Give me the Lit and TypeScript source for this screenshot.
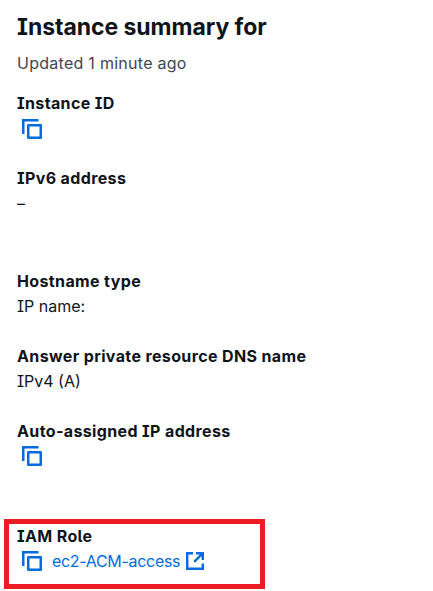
import { LitElement, html, css, svg } from "lit";
import { customElement, property } from "lit/decorators.js";

const copyIcon = html`<svg class="icon" width="20" height="20" viewBox="0 0 20 20" fill="none" stroke="currentColor" stroke-width="2.5">
  ${svg`<path d="M1.25 15V1.25H16.5"/><rect x="6.25" y="6.25" width="12.5" height="12.5" stroke-linejoin="round"/>`}
</svg>`;

const externalIcon = html`<svg class="icon" width="18" height="18" viewBox="0 0 18 18" fill="none" stroke="currentColor" stroke-width="2.4">
  ${svg`<path d="M7 1.2H1.2V16.8H16.8V11.5M10 1.2H16.8V8M16.3 1.7L8.2 9.8"/>`}
</svg>`;

@customElement("summary-field")
class SummaryField extends LitElement {
  @property() label = "";
  @property() value = "";
  @property() link = "";
  @property({ type: Boolean }) copy = false;

  static styles = css`
    :host { display: block; height: 50px; }
    .label { font-size: 16px; font-weight: 700; line-height: 24px; height: 24px; white-space: nowrap; letter-spacing: 0.37px; }
    .value { display: flex; align-items: center; height: var(--value-height, 26px); font-size: 16px; line-height: 20px; white-space: nowrap; }
    .icon { flex: none; color: #006ce0; }
    .copy { display: flex; margin-left: 5px; }
    .link { display: flex; align-items: center; gap: 6px; margin-left: 10px; color: #006ce0; letter-spacing: -0.31px; }
  `;

  render() {
    return html`
      <div class="label">${this.label}</div>
      <div class="value">
        ${this.copy ? html`<span class="copy">${copyIcon}</span>` : ""}
        ${this.value ? html`<span>${this.value}</span>` : ""}
        ${this.link ? html`<span class="link"><span>${this.link}</span>${externalIcon}</span>` : ""}
      </div>
    `;
  }
}

@customElement("app-root")
class AppRoot extends LitElement {
  static styles = css`
    :host {
      display: block; box-sizing: border-box; height: 591px; overflow: hidden;
      padding: 12px 0 0 4px; background: #fff; color: #0f141a;
      font-family: Inter, "Open Sans", sans-serif;
      font-feature-settings: "cv08", "cv05";
    }
    .head { padding-left: 13px; height: 79px; }
    h1 { margin: 0; font-size: 23px; line-height: 30px; font-weight: 700; white-space: nowrap; letter-spacing: -0.06px; }
    .updated { margin-top: 9px; font-size: 16px; line-height: 24px; color: #424650; letter-spacing: 0.27px; }
    .fields { display: flex; flex-direction: column; gap: 25px; padding-left: 13px; height: 428px; }
    .first { --value-height: 28px; }
    .section { margin-top: 28px; }
    .role { box-sizing: border-box; width: 261px; height: 70px; border: 5px solid #ed1c24; padding: 0 0 0 8px; }
  `;

  render() {
    return html`
      <div class="head">
        <h1>Instance summary for</h1>
        <div class="updated">Updated 1 minute ago</div>
      </div>
      <div class="fields">
        <summary-field class="first" label="Instance ID" copy></summary-field>
        <summary-field label="IPv6 address" value="–"></summary-field>
        <summary-field class="section" label="Hostname type" value="IP name:"></summary-field>
        <summary-field label="Answer private resource DNS name" value="IPv4 (A)"></summary-field>
        <summary-field label="Auto-assigned IP address" copy></summary-field>
      </div>
      <div class="role">
        <summary-field label="IAM Role" link="ec2-ACM-access" copy></summary-field>
      </div>
    `;
  }
}
